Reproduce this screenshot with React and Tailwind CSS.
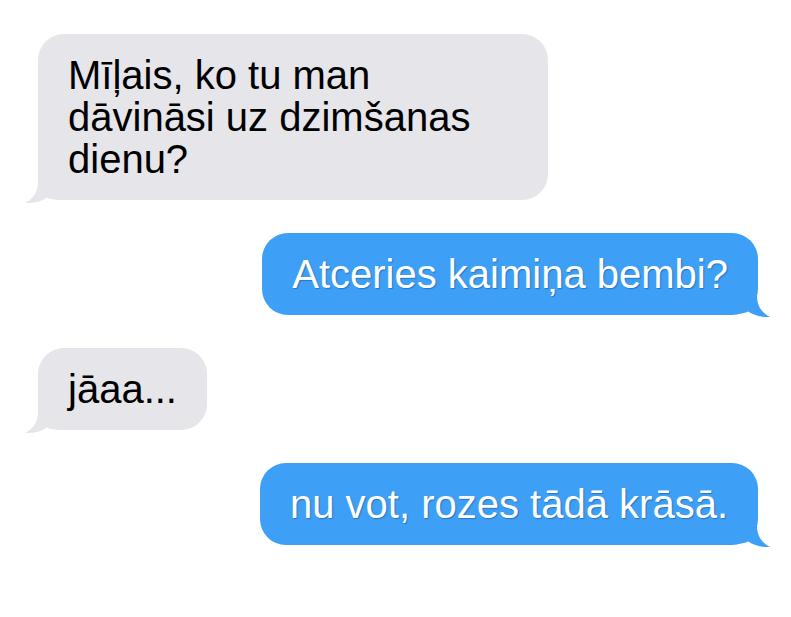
import React from "react";

function LeftTail() {
  return (
    <svg
      className="absolute left-[-14px] bottom-[-4px]"
      width="44"
      height="30"
      viewBox="0 0 44 30"
    >
      <path
        d="M14 0 L14 8 C14 18 9 25 1 29 C9 29.5 17 27.5 23 23.5 C27 25.5 32 26 44 26 L44 0 Z"
        fill="#e5e5ea"
      />
    </svg>
  );
}

function RightTail() {
  return (
    <svg
      className="absolute right-[-13px] bottom-[-3px]"
      width="44"
      height="30"
      viewBox="0 0 44 30"
    >
      <path
        d="M30 0 L30 8 C30 18 35 25 43 29 C35 29.5 27 27.5 21 23.5 C17 25.5 12 26 0 26 L0 0 Z"
        fill="#3d9ff5"
      />
    </svg>
  );
}

function Gray({ children, className = "" }) {
  return (
    <div
      className={
        "relative self-start ml-[38px] rounded-[26px] bg-[#e5e5ea] px-[30px] py-[20px] text-black " +
        className
      }
    >
      <LeftTail />
      <span className="relative">{children}</span>
    </div>
  );
}

function Blue({ children }) {
  return (
    <div className="relative self-end mr-[33px] rounded-[26px] bg-[#3d9ff5] px-[30px] py-[20px] text-white">
      <RightTail />
      <span className="relative [text-shadow:1px_1px_1px_rgba(0,40,90,0.35)]">
        {children}
      </span>
    </div>
  );
}

export default function App() {
  return (
    <div className="w-[791px] h-[617px] bg-white overflow-hidden font-['Liberation_Sans',Arial,sans-serif] text-[40px] leading-[42px]">
      <div className="flex flex-col gap-[33px] pt-[34px]">
        <Gray className="w-[510px]">
          Mīļais, ko tu man dāvināsi uz dzimšanas dienu?
        </Gray>
        <Blue>Atceries kaimiņa bembi?</Blue>
        <Gray>jāaa...</Gray>
        <Blue>nu vot, rozes tādā krāsā.</Blue>
      </div>
    </div>
  );
}
